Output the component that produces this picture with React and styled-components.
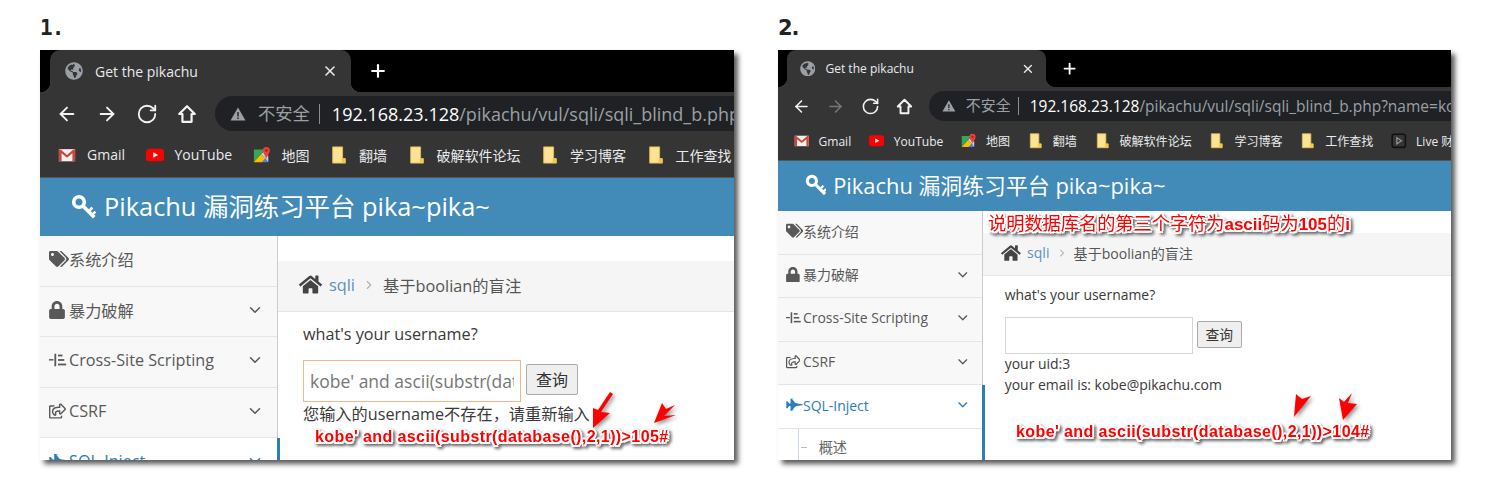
import React from "react";
import styled, { createGlobalStyle } from "styled-components";
import { ArrowLeft, ArrowRight, RotateCw, Plus, X, ChevronDown, ChevronRight } from "lucide-react";
import { FaTags, FaLock, FaHome, FaRegShareSquare, FaFighterJet, FaGlobeAmericas } from "react-icons/fa";

const u = (n) => `calc(${n}px * var(--k))`;
const SANS = `"Open Sans", "Noto Sans CJK SC", sans-serif`;

const Global = createGlobalStyle`
  html, body { margin: 0; background: #fff; }
  * { box-sizing: border-box; }
`;

const Page = styled.div`
  width: 1492px;
  height: 500px;
  padding: 16px 0 0 40px;
  display: flex;
  gap: 44px;
  overflow: hidden;
`;
const Figure = styled.section`
  display: flex;
  flex-direction: column;
`;
const Number = styled.h2`
  margin: 0;
  height: 34px;
  font-size: 21px;
  line-height: 25px;
  color: #222;
  font-weight: 700;
  letter-spacing: -1px;
  font-family: ${(p) => (p.$mono ? `"DejaVu Sans Mono"` : `"DejaVu Sans"`)}, monospace;
`;
const Shot = styled.div`
  --k: ${(p) => p.$k};
  position: relative;
  width: ${(p) => p.$w}px;
  height: 410px;
  overflow: hidden;
  background: #fff;
  font-family: ${SANS};
`;
const Frame = styled.div`
  width: ${(p) => p.$w}px;
  height: 410px;
  box-shadow: 4px 4px 5px rgba(0, 0, 0, 0.65);
`;

/* browser chrome */
const TabStrip = styled.div`
  height: ${(p) => p.$h}px;
  background: #000;
  display: flex;
  align-items: flex-end;
  padding-left: ${u(10)};
  color: #fff;
`;
const Tab = styled.div`
  position: relative;
  width: ${u(301)};
  height: 100%;
  background: #353535;
  border-radius: ${u(10)} ${u(10)} 0 0;
  display: flex;
  align-items: center;
  padding: 0 ${u(13)} 0 ${u(15)};
  font-size: ${u(14)};
  color: #e8eaed;
  &::before, &::after {
    content: "";
    position: absolute;
    bottom: 0;
    width: 10px;
    height: 10px;
  }
  &::before { left: -10px; background: radial-gradient(circle at 0 0, #000 10px, #353535 10.5px); }
  &::after { right: -10px; background: radial-gradient(circle at 100% 0, #000 10px, #353535 10.5px); }
`;
const Favicon = styled.span`
  display: flex;
  color: #9aa0a6;
  margin-right: ${u(12)};
  svg { width: ${u(18)}; height: ${u(18)}; }
`;
const TabTitle = styled.span`
  flex: 1;
`;
const CloseTab = styled.span`
  display: flex;
  svg { width: ${u(16)}; height: ${u(16)}; stroke-width: 2.4; }
`;
const NewTab = styled.span`
  display: flex;
  margin-left: ${u(17)};
  align-self: center;
  svg { width: ${u(20)}; height: ${u(20)}; stroke-width: 2.6; }
`;
const Toolbar = styled.div`
  height: ${(p) => p.$h}px;
  background: #353535;
  display: flex;
  align-items: center;
  padding-left: ${u(16)};
  gap: ${u(18)};
`;
const NavButton = styled.span`
  display: flex;
  color: ${(p) => (p.$off ? "#75777a" : "#f1f3f4")};
  svg { width: ${u(22)}; height: ${u(22)}; }
`;
const Omnibox = styled.div`
  flex: 1;
  height: ${u(35)};
  margin-left: ${u(-1)};
  background: #202124;
  border-radius: ${u(18)} 0 0 ${u(18)};
  display: flex;
  align-items: center;
  padding-left: ${u(15)};
  white-space: nowrap;
  overflow: hidden;
`;
const Warn = styled.svg`
  width: ${u(16)};
  height: ${u(16)};
  flex: none;
`;
const Insecure = styled.span`
  margin-left: ${u(12)};
  padding-right: ${u(9)};
  border-right: 1px solid #8a8d91;
  font-size: ${u(17.3)};
  line-height: ${u(20)};
  color: #9aa0a6;
`;
const Url = styled.span`
  margin-left: ${u(12)};
  font-size: ${u(18)};
  color: #9aa0a6;
  b { font-weight: 400; color: #fff; }
`;
const Bookmarks = styled.div`
  height: ${(p) => p.$h}px;
  background: #353535;
  border-bottom: 1px solid #555;
  display: flex;
  align-items: center;
  padding: 0 0 3px ${u(18)};
  gap: ${u(20.5)};
  white-space: nowrap;
  overflow: hidden;
`;
const Mark = styled.span`
  display: flex;
  align-items: center;
  gap: ${u(11)};
  font-size: ${u(14)};
  color: #e8eaed;
  svg { width: ${u(18)}; height: ${u(18)}; flex: none; }
`;

const GmailIcon = () => (
  <svg viewBox="0 0 20 20">
    <rect x="1" y="3.500" width="18" height="13.500" fill="#f1f1f1" />
    <path d="M1 4v13h3V8l6 5 6-5v9h3V4h-2l-7 6-7-6z" fill="#d3453a" />
  </svg>
);
const YoutubeIcon = () => (
  <svg viewBox="0 0 20 20">
    <rect x="0" y="3" width="20" height="14" rx="4" fill="#f00" />
    <path d="M8 7l5.400 3L8 13z" fill="#fff" />
  </svg>
);
const MapsIcon = () => (
  <svg viewBox="0 0 20 20">
    <path d="M1 4h12L1 18z" fill="#34a853" />
    <path d="M1 18L9 9l5 5-4 4z" fill="#fbbc04" />
    <path d="M10 18l4-4 3 4z" fill="#4285f4" />
    <path d="M14 14l-5-5 4-4 4 6v7z" fill="#c3d4ec" />
    <circle cx="14.800" cy="5" r="4" fill="#ea4335" />
    <path d="M11.500 7.200L14.800 14l3.300-6.800z" fill="#ea4335" />
    <circle cx="14.800" cy="5" r="1.400" fill="#8c2a22" />
  </svg>
);
const FolderIcon = () => (
  <svg viewBox="0 0 20 20">
    <path d="M3 1h11v13h3v5H3z" fill="#fde293" stroke="#e2bd57" />
    <rect x="13" y="14" width="4" height="5" fill="#f3c64f" />
  </svg>
);
const LiveIcon = () => (
  <svg viewBox="0 0 20 20">
    <rect x="1.500" y="1.500" width="17" height="17" rx="2.500" fill="none" stroke="#111" strokeWidth="2" />
    <path d="M7.500 6l6 4-6 4z" fill="none" stroke="#999" strokeWidth="1.500" />
  </svg>
);

const HomeIcon = () => (
  <svg viewBox="0 0 24 24" fill="none" stroke="currentColor" strokeWidth="2.400" strokeLinejoin="round">
    <path d="M12 3.500L3.500 12H7v8.500h10V12h3.500z" />
  </svg>
);

/* site */
const SiteHeader = styled.header`
  height: ${u(58)};
  background: #428bb9;
  color: #fff;
  display: flex;
  align-items: center;
  padding: 0 0 ${u(4)} ${u(31)};
  font-size: ${u(25.4)};
`;
const KeySvg = styled.svg`
  width: ${u(25)};
  height: ${u(25)};
  margin: ${u(2)} ${u(8)} 0 0;
`;
const KeyIcon = () => (
  <KeySvg viewBox="0 0 25 25" fill="none" stroke="#fff" strokeLinecap="square">
    <circle cx="8" cy="8" r="5.300" strokeWidth="3.600" />
    <path d="M12.500 12.500L22 22" strokeWidth="3.600" />
    <path d="M17.500 17.500L20.500 14.500M21 21L23.500 18.500" strokeWidth="2.600" />
  </KeySvg>
);
const Columns = styled.div`
  display: flex;
  align-items: stretch;
  height: 100%;
`;
const Sidebar = styled.nav`
  width: ${u(238)};
  flex: none;
  background: #f8f8f8;
  border-right: 1px solid #ccc;
  color: #585858;
`;
const MenuItem = styled.div`
  height: ${u(50.5)};
  display: flex;
  align-items: center;
  padding: 0 ${u(13)} ${u(3)} ${u(9)};
  font-size: ${u(16.2)};
  border-bottom: 1px solid #e5e5e5;
  background: ${(p) => (p.$active ? "#fff" : "#f8f8f8")};
  color: ${(p) => (p.$active ? "#2b7dbc" : "#585858")};
  font-weight: ${(p) => (p.$active ? 500 : 400)};
`;
const MenuIcon = styled.span`
  display: flex;
  width: ${u(20)};
  svg { width: ${(p) => u(p.$size)}; height: ${u(18)}; }
`;
const MenuLabel = styled.span`
  flex: 1;
`;
const Caret = styled(ChevronDown)`
  width: ${u(18)};
  height: ${u(18)};
`;
const ActiveGroup = styled.div`
  position: relative;
  margin-right: -3px;
  border-right: 3px solid #2b7dbc;
  background: #fff;
  height: 100%;
`;
const SubItem = styled.div`
  position: relative;
  margin-left: ${u(23)};
  padding-left: ${u(23)};
  height: ${u(42)};
  display: flex;
  align-items: center;
  font-size: ${u(16.5)};
  border-left: 1px solid #ccd9e8;
  color: #666;
  &::before {
    content: "";
    width: ${u(8)};
    height: 1px;
    background: #bbb;
    position: absolute;
    left: ${u(2)};
    top: 50%;
  }
`;
const Main = styled.main`
  flex: 1;
  color: #393939;
  min-width: 0;
`;
const Crumbs = styled.div`
  margin-top: ${u(25)};
  height: ${u(50.5)};
  background: #f5f5f5;
  border-bottom: 1px solid #e5e5e5;
  display: flex;
  align-items: center;
  padding: 0 0 ${u(2)} ${u(21)};
  font-size: ${u(16.3)};
  color: #555;
  white-space: nowrap;
`;
const CrumbHome = styled(FaHome)`
  width: ${u(23)};
  height: ${u(21)};
  margin-right: ${u(7)};
  color: #444;
`;
const CrumbLink = styled.span`
  color: #5b91c0;
`;
const CrumbSep = styled(ChevronRight)`
  width: ${u(14)};
  height: ${u(14)};
  margin: 0 ${u(7)};
  color: #b0b0b0;
`;
const Body = styled.div`
  padding: ${u(10)} 0 0 ${u(25)};
  font-size: ${u(16.2)};
  line-height: ${u(24)};
`;
const Question = styled.p`
  margin: 0 0 ${u(14)};
`;
const Form = styled.form`
  display: flex;
  align-items: center;
  gap: ${u(5)};
`;
const TextInput = styled.input`
  width: ${u(218)};
  height: ${u(42.500)};
  padding: 0 ${u(6)};
  font: inherit;
  font-size: ${u(17.500)};
  color: #777;
  background: #fff;
  border: 1px solid ${(p) => (p.$focus ? "#f5b77f" : "#d5d5d5")};
  outline: none;
`;
const Submit = styled.button`
  width: ${u(52)};
  height: ${u(31)};
  margin-bottom: ${u(3)};
  padding: 0;
  font-family: ${SANS};
  font-size: ${u(16)};
  color: #333;
  background: #efefef;
  border: 1px solid #aaa;
  border-radius: 2px;
`;
const Line = styled.div`
  white-space: nowrap;
`;

/* annotations drawn on top of the screenshot */
const halo = `
  2px 0 0 #fff, -2px 0 0 #fff, 0 2px 0 #fff, 0 -2px 0 #fff,
  1.5px 1.5px 0 #fff, -1.5px 1.5px 0 #fff, 1.5px -1.5px 0 #fff, -1.5px -1.5px 0 #fff
`;
const Note = styled.div`
  position: absolute;
  left: ${(p) => p.$x}px;
  top: ${(p) => p.$y}px;
  color: #f00;
  white-space: nowrap;
  text-shadow: ${halo};
  filter: drop-shadow(2px 2px 1.5px rgba(0, 0, 0, 0.6));
  font-family: "Liberation Sans", "Noto Sans CJK SC", sans-serif;
  font-weight: 700;
  font-size: 16px;
  line-height: 20px;
  letter-spacing: 0.4px;
`;
const CnNote = styled(Note)`
  font-size: 17px;
  letter-spacing: 0;
  span { font-size: 18.200px; font-weight: 400; }
`;
const Arrows = styled.svg`
  position: absolute;
  inset: 0;
  width: 100%;
  height: 100%;
  filter: drop-shadow(2px 2px 2px rgba(0, 0, 0, 0.45));
  pointer-events: none;
`;

function XssIcon() {
  return (
    <svg viewBox="0 0 20 18" fill="currentColor">
      <rect x="0" y="8" width="5" height="1.600" />
      <rect x="6" y="2" width="2" height="14" />
      <rect x="10" y="3" width="5" height="2" />
      <rect x="10" y="8" width="7" height="2" />
      <rect x="10" y="13" width="9" height="2" />
    </svg>
  );
}

const menu = [
  { label: "系统介绍", Icon: FaTags, size: 20 },
  { label: "暴力破解", Icon: FaLock, size: 16, caret: true },
  { label: "Cross-Site Scripting", Icon: XssIcon, size: 18, caret: true },
  { label: "CSRF", Icon: FaRegShareSquare, size: 17, caret: true },
];

const Browser = ({ data }) => (
  <Figure>
    <Number $mono={data.mono}>{data.number}</Number>
    <Frame $w={data.width}>
      <Shot $k={data.k} $w={data.width}>
        <TabStrip $h={data.strip}>
          <Tab>
            <Favicon><FaGlobeAmericas /></Favicon>
            <TabTitle>Get the pikachu</TabTitle>
            <CloseTab><X /></CloseTab>
          </Tab>
          <NewTab><Plus /></NewTab>
        </TabStrip>
        <Toolbar $h={data.bar}>
          <NavButton><ArrowLeft /></NavButton>
          <NavButton $off={data.forwardOff}><ArrowRight /></NavButton>
          <NavButton><RotateCw /></NavButton>
          <NavButton><HomeIcon /></NavButton>
          <Omnibox>
            <Warn viewBox="0 0 16 16"><path d="M8 1.500L15.500 14.500H.5z" fill="#9aa0a6" /><path d="M7.300 6h1.400v4.500H7.300zM7.300 11.500h1.400V13H7.300z" fill="#202124" /></Warn>
            <Insecure>不安全</Insecure>
            <Url><b>192.168.23.128</b>/pikachu/vul/sqli/sqli_blind_b.php{data.query}</Url>
          </Omnibox>
        </Toolbar>
        <Bookmarks $h={data.marks}>
          <Mark><GmailIcon />Gmail</Mark>
          <Mark><YoutubeIcon />YouTube</Mark>
          <Mark><MapsIcon />地图</Mark>
          <Mark><FolderIcon />翻墙</Mark>
          <Mark><FolderIcon />破解软件论坛</Mark>
          <Mark><FolderIcon />学习博客</Mark>
          <Mark><FolderIcon />工作查找</Mark>
          {data.live && <Mark><LiveIcon />Live 财</Mark>}
        </Bookmarks>
        <SiteHeader><KeyIcon />Pikachu 漏洞练习平台 pika~pika~</SiteHeader>
        <Columns>
          <Sidebar>
            {menu.map(({ label, Icon, size, caret }) => (
              <MenuItem key={label}>
                <MenuIcon $size={size}><Icon /></MenuIcon>
                <MenuLabel>{label}</MenuLabel>
                {caret && <Caret />}
              </MenuItem>
            ))}
            <ActiveGroup>
              <MenuItem $active>
                <MenuIcon $size={20}><FaFighterJet /></MenuIcon>
                <MenuLabel>SQL-Inject</MenuLabel>
                <Caret />
              </MenuItem>
              <SubItem>概述</SubItem>
            </ActiveGroup>
          </Sidebar>
          <Main>
            <Crumbs>
              <CrumbHome />
              <CrumbLink>sqli</CrumbLink>
              <CrumbSep />
              基于boolian的盲注
            </Crumbs>
            <Body>
              <Question>what's your username?</Question>
              <Form>
                <TextInput readOnly value={data.input} $focus={data.focus} />
                <Submit type="button">查询</Submit>
              </Form>
              {data.lines.map((line) => <Line key={line}>{line}</Line>)}
            </Body>
          </Main>
        </Columns>
        <Arrows>
          {data.arrows.map((pts) => <polygon key={pts} points={pts} fill="#f00" />)}
        </Arrows>
        {data.cn && <CnNote $x={210} $y={164}><span>说明数据库名的第三个字符为</span>ascii<span>码为</span>105<span>的</span>i</CnNote>}
        <Note $x={data.noteX} $y={data.noteY}>{data.note}</Note>
      </Shot>
    </Frame>
  </Figure>
);

const shots = [
  {
    number: "1.", mono: true, width: 694, k: 1, strip: 42, bar: 43, marks: 43,
    query: "?name=kobe", focus: true,
    input: "kobe' and ascii(substr(database(),2,1))>105#",
    lines: ["您输入的username不存在，请重新输入"],
    note: "kobe' and ascii(substr(database(),2,1))>105#", noteX: 275, noteY: 377,
    arrows: [
      "570,342 573,344 561,362 570,363 553,378 553,358 558,360",
      "635,355 624,366 636,365 614,373 622,353 626,359",
    ],
  },
  {
    number: "2.", width: 673, k: 0.862, strip: 37, bar: 38, marks: 36,
    query: "?name=kobe", forwardOff: true, live: true, cn: true,
    input: "",
    lines: ["your uid:3", "your email is: kobe@pikachu.com"],
    note: "kobe' and ascii(substr(database(),2,1))>104#", noteX: 238, noteY: 372,
    arrows: [
      "519,345 524,349 533,346 516,367 518,344",
      "574,343 570,353 579,354 565,370 561,348 566,352",
    ],
  },
];

export default function App() {
  return (
    <>
      <Global />
      <Page>
        {shots.map((s) => <Browser key={s.number} data={s} />)}
      </Page>
    </>
  );
}
